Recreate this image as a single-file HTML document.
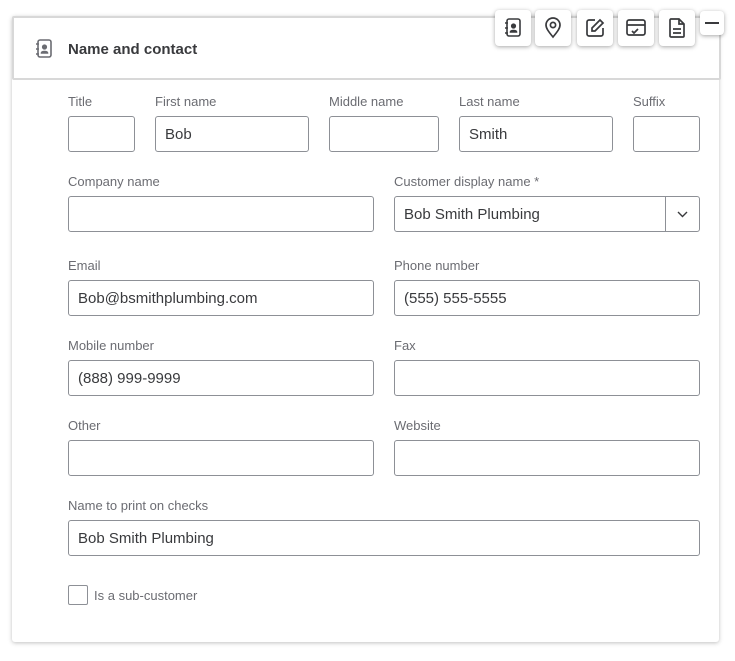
<!DOCTYPE html>
<html><head><style>
body{margin:0;width:735px;height:661px;background:#fff;font-family:"Liberation Sans",sans-serif;position:relative;overflow:hidden}
.card{position:absolute;left:12px;top:16px;width:707px;height:626px;background:#fff;border-radius:3px;box-shadow:0 1px 4px rgba(0,0,0,.25)}
.hdr{position:absolute;left:12px;top:16px;width:705px;height:60px;border:2px solid #d8d8d8;border-radius:2px;background:#fff}
.title{position:absolute;left:68px;top:41px;font-size:15px;font-weight:bold;color:#393a3d}
.lbl{position:absolute;font-size:13px;color:#6b6c72}
.in{position:absolute;height:36px;border:1px solid #8d9096;border-radius:3px;box-sizing:border-box;font-size:15px;color:#393a3d;padding:9px 9px;line-height:17px}
.btn{position:absolute;top:10px;width:36px;height:36px;background:#fff;border-radius:4px;box-shadow:0 1px 4px rgba(0,0,0,.35);display:flex;align-items:center;justify-content:center}
</style></head><body>
<div class="card"></div>
<div class="hdr"></div>
<svg style="position:absolute;left:35px;top:39px" width="18" height="20" viewBox="0 0 18 20" fill="none" stroke="#6b6c72" stroke-width="1.6"><rect x="3" y="1" width="13" height="17" rx="2"/><path d="M1 5h3M1 10h3M1 15h3"/><circle cx="9.5" cy="8" r="1.8" fill="#6b6c72"/><path d="M6.5 14c0-2 6-2 6 0z" fill="#6b6c72"/></svg>
<div class="title">Name and contact</div>
<div class="btn" style="left:495px"><svg width="18" height="20" viewBox="0 0 18 20" fill="none" stroke="#393a3d" stroke-width="1.6"><rect x="3" y="1" width="13" height="17" rx="2"/><path d="M1 5h3M1 10h3M1 15h3"/><circle cx="9.5" cy="8" r="1.8" fill="#393a3d"/><path d="M6.5 14c0-2 6-2 6 0z" fill="#393a3d"/></svg></div>
<div class="btn" style="left:535px"><svg width="18" height="22" viewBox="0 0 18 22" fill="none" stroke="#393a3d" stroke-width="1.7"><path d="M9 20C4 14 2 11 2 8a7 7 0 0114 0c0 3-2 6-7 12z"/><circle cx="9" cy="8" r="2.6"/></svg></div>
<div class="btn" style="left:577px"><svg width="20" height="20" viewBox="0 0 20 20" fill="none" stroke="#393a3d" stroke-width="1.7"><path d="M10 2H4a2 2 0 00-2 2v12a2 2 0 002 2h12a2 2 0 002-2v-6"/><path d="M15 2l3 3-8 8H7v-3z"/></svg></div>
<div class="btn" style="left:618px"><svg width="22" height="20" viewBox="0 0 22 20" fill="none" stroke="#393a3d" stroke-width="1.7"><rect x="2" y="2" width="18" height="15" rx="2"/><path d="M2 7h18M7 13l2 2 4-4"/></svg></div>
<div class="btn" style="left:659px"><svg width="18" height="22" viewBox="0 0 18 22" fill="none" stroke="#393a3d" stroke-width="1.7"><path d="M2 3a1 1 0 011-1h8l5 5v12a1 1 0 01-1 1H3a1 1 0 01-1-1z"/><path d="M11 2v5h5M5 12h8M5 16h8"/></svg></div>
<div class="btn" style="left:700px;top:11px;width:24px;height:24px"><div style="width:14px;height:1.5px;background:#393a3d"></div></div>

<div class="lbl" style="left:68px;top:94px">Title</div>
<div class="lbl" style="left:155px;top:94px">First name</div>
<div class="lbl" style="left:329px;top:94px">Middle name</div>
<div class="lbl" style="left:459px;top:94px">Last name</div>
<div class="lbl" style="left:633px;top:94px">Suffix</div>
<div class="in" style="left:68px;top:116px;width:67px"></div>
<div class="in" style="left:155px;top:116px;width:154px">Bob</div>
<div class="in" style="left:329px;top:116px;width:110px"></div>
<div class="in" style="left:459px;top:116px;width:154px">Smith</div>
<div class="in" style="left:633px;top:116px;width:67px"></div>

<div class="lbl" style="left:68px;top:174px">Company name</div>
<div class="lbl" style="left:394px;top:174px">Customer display name *</div>
<div class="in" style="left:68px;top:196px;width:306px"></div>
<div class="in" style="left:394px;top:196px;width:306px">Bob Smith Plumbing</div>
<div style="position:absolute;left:665px;top:197px;width:1px;height:34px;background:#8d9096"></div>
<svg style="position:absolute;left:677px;top:211px" width="11" height="7" viewBox="0 0 11 7" fill="none" stroke="#393a3d" stroke-width="1.4"><path d="M1 1l4.5 4.5L10 1"/></svg>

<div class="lbl" style="left:68px;top:258px">Email</div>
<div class="lbl" style="left:394px;top:258px">Phone number</div>
<div class="in" style="left:68px;top:280px;width:306px">Bob@bsmithplumbing.com</div>
<div class="in" style="left:394px;top:280px;width:306px">(555) 555-5555</div>

<div class="lbl" style="left:68px;top:338px">Mobile number</div>
<div class="lbl" style="left:394px;top:338px">Fax</div>
<div class="in" style="left:68px;top:360px;width:306px">(888) 999-9999</div>
<div class="in" style="left:394px;top:360px;width:306px"></div>

<div class="lbl" style="left:68px;top:418px">Other</div>
<div class="lbl" style="left:394px;top:418px">Website</div>
<div class="in" style="left:68px;top:440px;width:306px"></div>
<div class="in" style="left:394px;top:440px;width:306px"></div>

<div class="lbl" style="left:68px;top:498px">Name to print on checks</div>
<div class="in" style="left:68px;top:520px;width:632px">Bob Smith Plumbing</div>

<div style="position:absolute;left:68px;top:585px;width:20px;height:20px;border:1px solid #8d9096;border-radius:2px;box-sizing:border-box"></div>
<div class="lbl" style="left:94px;top:588px">Is a sub-customer</div>
</body></html>
